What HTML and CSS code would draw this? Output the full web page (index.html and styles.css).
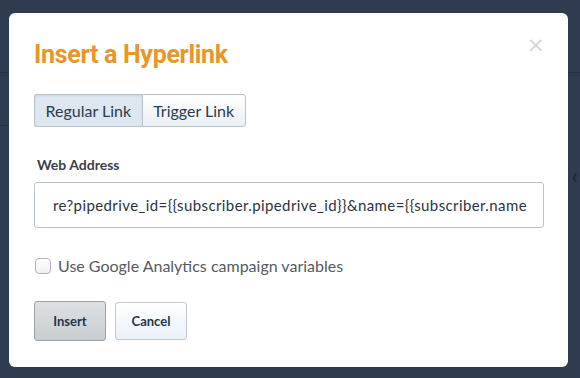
FILE: index.html
```html
<!DOCTYPE html>
<html lang="en">
<head>
    <meta charset="UTF-8">
    <title>Insert a Hyperlink</title>
    <link rel="stylesheet" href="styles.css">
</head>
<body>
    <!-- page behind the dialog -->
    <div class="backdrop">
        <div class="bg-line line1"></div>
        <div class="bg-line line2"></div>
        <div class="bg-line line3"></div>
        <span class="bg-chevron">&#8249;</span>
    </div>

    <div class="modal">
        <button class="close">&times;</button>
        <h1>Insert a Hyperlink</h1>

        <div class="tabs">
            <button class="tab active">Regular Link</button>
            <button class="tab">Trigger Link</button>
        </div>

        <label class="field-label">Web Address</label>
        <div class="url-input">re?pipedrive_id={{subscriber.pipedrive_id}}&amp;name={{subscriber.name</div>

        <label class="check-row">
            <span class="checkbox"></span>
            Use Google Analytics campaign variables
        </label>

        <div class="actions">
            <button class="btn btn-primary">Insert</button>
            <button class="btn">Cancel</button>
        </div>
    </div>
</body>
</html>
```

FILE: styles.css
```css
body {
    margin: 0;
    width: 580px;
    height: 378px;
    overflow: hidden;
    background-color: #2f3b4f;
    font-family: Lato, "Open Sans", sans-serif;
    color: #2c3a4d;
    position: relative;
}
.backdrop {
    position: absolute;
    inset: 0;
}
.bg-line {
    position: absolute;
    height: 1px;
    background-color: #26303f;
}
.line1 { top: 72px; left: 0; width: 10px; }
.line2 { top: 125px; left: 0; width: 10px; }
.line3 { top: 72px; right: 0; width: 12px; }
.bg-chevron {
    position: absolute;
    top: 162px;
    right: 2px;
    font-size: 22px;
    font-weight: bold;
    color: #1f2a3b;
}
.modal {
    position: relative;
    margin: 13px 0 0 9px;
    width: 559px;
    height: 354px;
    box-sizing: border-box;
    padding: 26px 24px 0 25px;
    background-color: #fff;
    border-radius: 6px;
}
.close {
    position: absolute;
    top: 21px;
    right: 23px;
    padding: 0;
    border: none;
    background: none;
    font-size: 22px;
    line-height: 1;
    color: #d3d6da;
    font-family: "DejaVu Sans", sans-serif;
}
h1 {
    margin: 0;
    font-family: Roboto, sans-serif;
    font-size: 25px;
    letter-spacing: -0.3px;
    font-weight: bold;
    line-height: 32px;
    color: #e8952a;
}
.tabs {
    display: flex;
    margin-top: 23px;
}
.tab {
    height: 33px;
    padding: 0 10.5px;
    font-family: Lato, sans-serif;
    font-size: 16px;
    color: #2c3a4d;
    background: linear-gradient(#ffffff, #eaf0f5);
    border: 1px solid #b9c2cc;
    border-radius: 0 3px 3px 0;
}
.tab.active {
    background: #dce7f1;
    border-radius: 3px 0 0 3px;
    border-right: none;
    box-shadow: inset 0 1px 2px rgba(0, 0, 0, 0.08);
}
.field-label {
    display: block;
    margin: 29px 0 0 3px;
    font-size: 14px;
    font-weight: bold;
    color: #3a3f47;
}
.url-input {
    margin-top: 9px;
    height: 46px;
    box-sizing: border-box;
    padding: 0 18px;
    line-height: 44px;
    font-size: 15px;
    letter-spacing: 0.4px;
    color: #2c3340;
    white-space: nowrap;
    overflow: hidden;
    border: 1px solid #b7c3d3;
    border-radius: 3px;
}
.check-row {
    display: flex;
    align-items: center;
    gap: 7px;
    margin: 28px 0 0 1px;
    font-size: 16px;
    color: #555b63;
}
.checkbox {
    width: 14px;
    height: 14px;
    border: 1px solid #b0b4b8;
    border-radius: 4px;
    background: linear-gradient(#ffffff, #eef0f2);
}
.actions {
    display: flex;
    gap: 9px;
    margin-top: 26px;
    align-items: center;
}
.btn {
    width: 72px;
    height: 38px;
    font-family: Lato, sans-serif;
    font-size: 13px;
    font-weight: bold;
    color: #1f3550;
    background: linear-gradient(#ffffff, #e9f1f7);
    border: 1px solid #c0c7ce;
    border-radius: 3px;
}
.btn-primary {
    height: 40px;
    background: linear-gradient(#dde1e4, #c8cdd1);
    border-color: #9aa1a8;
}
```
